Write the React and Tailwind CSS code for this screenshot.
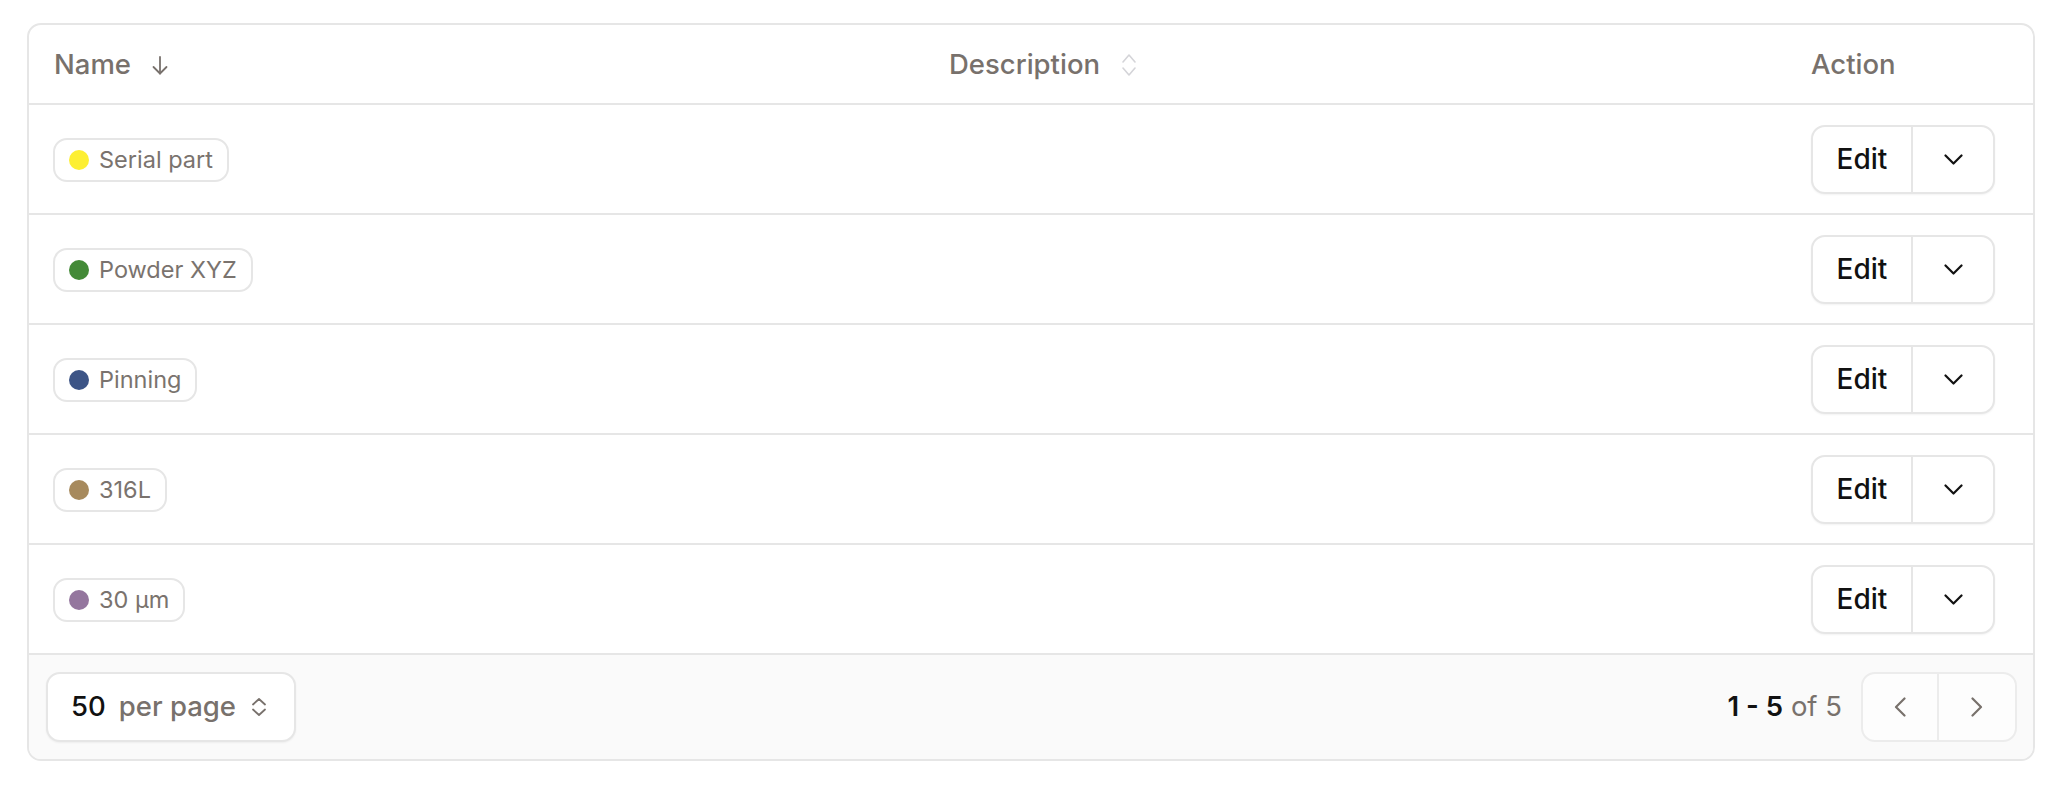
const rows = [
  { name: "Serial part", color: "#fdef33" },
  { name: "Powder XYZ", color: "#438a37" },
  { name: "Pinning", color: "#3c5486" },
  { name: "316L", color: "#a78a5d" },
  { name: "30 µm", color: "#94769e" },
];

const ArrowDown = () => (
  <svg width="16" height="19" viewBox="0 0 16 19" fill="none" stroke="currentColor" strokeWidth="1.8" strokeLinecap="round" strokeLinejoin="round">
    <path d="M8 1v16.5" />
    <path d="M1.5 11l6.5 6.5 6.5-6.5" />
  </svg>
);

const UpDown = ({ w = 14, h = 22, sw = 1.6 }) => (
  <svg width={w} height={h} viewBox={`0 0 ${w} ${h}`} fill="none" stroke="currentColor" strokeWidth={sw} strokeLinecap="round" strokeLinejoin="round">
    <path d={`M1 ${h * 0.36}L${w / 2} 1l${w / 2 - 1} ${h * 0.36 - 1}`} />
    <path d={`M1 ${h * 0.64}L${w / 2} ${h - 1}l${w / 2 - 1} ${-(h * 0.36 - 1)}`} />
  </svg>
);

const ChevronDown = () => (
  <svg width="19" height="11" viewBox="0 0 19 11" fill="none" stroke="currentColor" strokeWidth="2.2" strokeLinecap="round" strokeLinejoin="round">
    <path d="M1.5 1.5l8 8 8-8" />
  </svg>
);

const ChevronSide = ({ dir }) => (
  <svg width="12" height="20" viewBox="0 0 12 20" fill="none" stroke="currentColor" strokeWidth="2.2" strokeLinecap="round" strokeLinejoin="round">
    {dir === "left" ? <path d="M10.5 1.5L2 10l8.5 8.5" /> : <path d="M1.5 1.5L10 10l-8.5 8.5" />}
  </svg>
);

const Badge = ({ name, color }) => (
  <span className="inline-flex items-center h-[44px] pl-[14px] pr-[14px] gap-[10px] rounded-[14px] border-2 border-[#e6e6e6] bg-white text-[23.5px] text-[#7a736e]">
    <span className="w-[20px] h-[20px] rounded-full" style={{ background: color }} />
    <span className="leading-none">{name}</span>
  </span>
);

export default function App() {
  return (
    <div className="px-[27px] pt-[23px] pb-[27px] bg-white" style={{ fontFamily: "Inter, 'Noto Sans', sans-serif" }}>
      <div className="border-2 border-[#e6e6e6] rounded-[14px] overflow-hidden bg-white">
        {/* header */}
        <div className="grid grid-cols-[894px_862px_1fr] h-[80px] pt-[2px] items-center border-b-2 border-[#e6e6e6] text-[27.5px] font-medium text-[#78716c]">
          <div className="pl-[25px] flex items-center gap-[21px]">
            <span>Name</span>
            <ArrowDown />
          </div>
          <div className="pl-[26px] flex items-center gap-[22px]">
            <span>Description</span>
            <span className="text-[#d4d4d8]">
              <UpDown />
            </span>
          </div>
          <div className="pl-[26px]">Action</div>
        </div>

        {rows.map((r) => (
          <div key={r.name} className="grid grid-cols-[894px_862px_1fr] h-[110px] items-center border-b-2 border-[#e6e6e6]">
            <div className="pl-[24px] pt-[2px]">
              <Badge name={r.name} color={r.color} />
            </div>
            <div />
            <div className="pl-[26px]">
              <div className="inline-flex h-[69px] rounded-[14px] border-2 border-[#e6e6e6] bg-white shadow-[0_1px_2px_rgba(0,0,0,0.05)] text-[#111111]">
                <button className="w-[100px] flex items-center justify-center text-[28px] font-medium border-r-2 border-[#e6e6e6]">
                  Edit
                </button>
                <button className="w-[80px] flex items-center justify-center">
                  <ChevronDown />
                </button>
              </div>
            </div>
          </div>
        ))}

        {/* footer */}
        <div className="h-[104px] bg-[#fafafa] flex items-center justify-between pl-[17px] pr-[16px]">
          <button className="h-[70px] w-[250px] rounded-[14px] border-2 border-[#e6e6e6] bg-white shadow-[0_1px_2px_rgba(0,0,0,0.05)] flex items-center pl-[23px] text-[27.5px] font-medium">
            <span className="text-[#111111]">50</span>
            <span className="ml-[13px] text-[#78716c]">per page</span>
            <span className="ml-[16px] text-[#78716c]">
              <UpDown w={14} h={18} sw={1.8} />
            </span>
          </button>
          <div className="flex items-center gap-[19px]">
            <div className="text-[27.5px]">
              <span className="font-semibold text-[#111111]">1 - 5</span>
              <span className="text-[#78716c]"> of 5</span>
            </div>
            <div className="inline-flex h-[70px] rounded-[14px] border-2 border-[#ececec] bg-[#fdfdfd] text-[#78716c]">
              <button className="w-[76px] flex items-center justify-center border-r-2 border-[#ececec]">
                <ChevronSide dir="left" />
              </button>
              <button className="w-[76px] flex items-center justify-center">
                <ChevronSide dir="right" />
              </button>
            </div>
          </div>
        </div>
      </div>
    </div>
  );
}
